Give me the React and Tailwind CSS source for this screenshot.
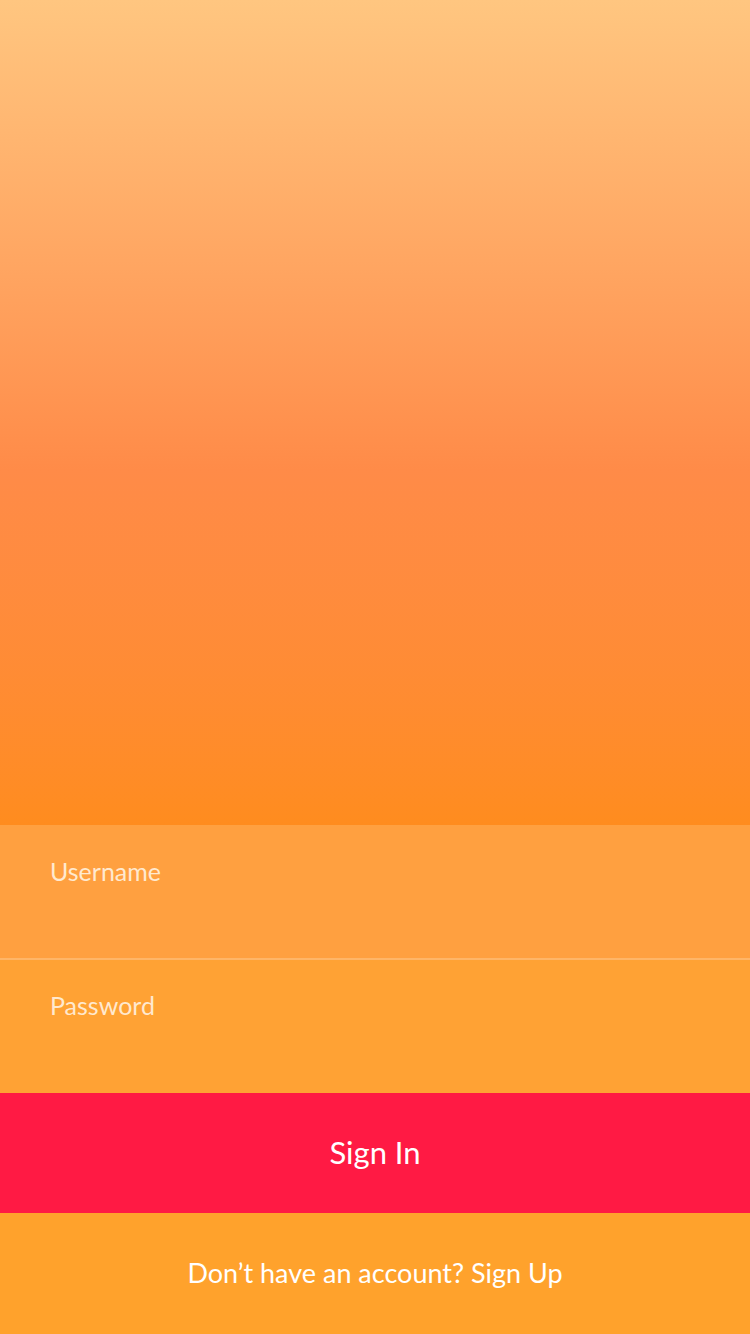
export default function App() {
  return (
    <div
      className="w-[750px] h-[1334px] flex flex-col overflow-hidden"
      style={{ fontFamily: "Lato, 'Open Sans', sans-serif" }}
    >
      {/* Hero gradient */}
      <div className="h-[825px] shrink-0 bg-linear-to-b from-[#FFC680] via-[#FF8B48] via-57% to-[#FF8C1E]" />

      {/* Username */}
      <div className="h-[133px] shrink-0 bg-[#FFA040] px-[50px] pt-[31px]">
        <span className="text-[25px] leading-[30px] text-[#FFE9CF]">Username</span>
      </div>
      <div className="h-[2px] shrink-0 bg-[#FFB567]" />

      {/* Password */}
      <div className="h-[133px] shrink-0 bg-[#FFA234] px-[50px] pt-[30px]">
        <span className="text-[25px] leading-[30px] text-[#FFE9CF]">Password</span>
      </div>

      {/* Sign in */}
      <button className="h-[120px] shrink-0 bg-[#FF1A44] flex items-center justify-center text-white text-[31px] pb-[1px]">
        Sign In
      </button>

      {/* Footer */}
      <div className="flex-1 bg-[#FFA22C] flex items-center justify-center text-white text-[27px] pb-[1px]">
        Don’t have an account? Sign Up
      </div>
    </div>
  );
}
